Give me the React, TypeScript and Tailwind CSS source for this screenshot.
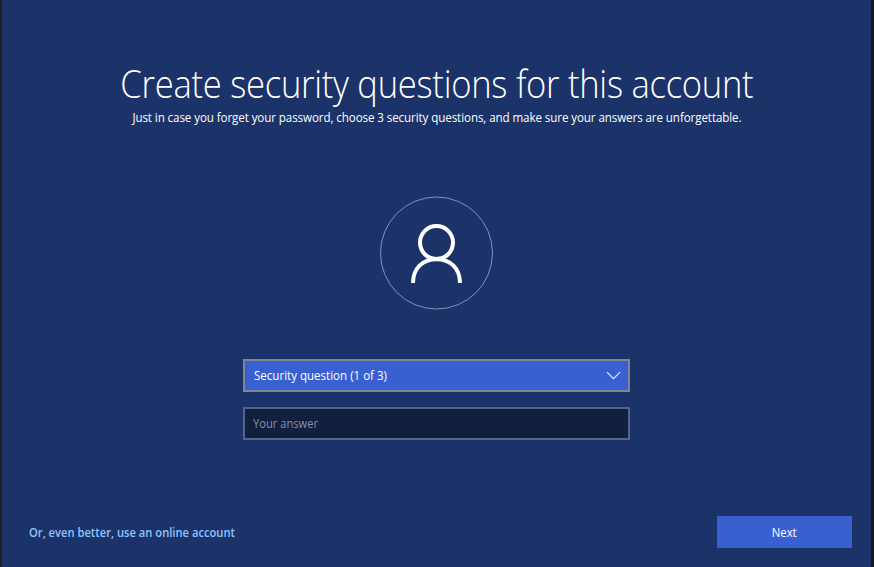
function UserAvatar() {
  return (
    <svg className="block h-[114px] w-[113px]" viewBox="0 0 113 114" fill="none">
      <circle cx="56.5" cy="57" r="56" stroke="#7f93b8" strokeWidth="1" />
      <circle cx="56.5" cy="46.6" r="16.5" stroke="#fff" strokeWidth="4" />
      <path d="M33 87C33 72.5 42.5 63.2 56.5 63.2S80 72.5 80 87" stroke="#fff" strokeWidth="4" />
    </svg>
  );
}

export default function App() {
  return (
    <div className="flex h-[567px] w-[874px] border-l-2 border-r-3 border-l-[#1c1f26] border-r-[#16191c] bg-[#1c3369] font-['Open_Sans','Noto_Sans',sans-serif] text-white">
      <main className="flex w-full flex-col items-center">
        <h1 className="mt-[56px] h-[54px] scale-x-[0.91] whitespace-nowrap text-[38px] leading-[54px] font-light tracking-[-0.3px]">
          Create security questions for this account
        </h1>
        <p className="h-[16px] scale-x-[0.967] whitespace-nowrap text-[12px] leading-[16px] tracking-[-0.1px]">
          Just in case you forget your password, choose 3 security questions, and make sure your answers are unforgettable.
        </p>
        <div className="mt-[70px]">
          <UserAvatar />
        </div>
        <form className="mt-[49px] flex w-[387px] flex-col gap-[15px]">
          <button type="button" className="flex h-[33px] items-center justify-between border-2 border-[#80858f] bg-[#3860d0] pr-[7px] pl-[9px] text-[12px]">
            <span className="origin-left scale-x-[0.962]">Security question (1 of 3)</span>
            <svg className="h-[9px] w-[15px]" viewBox="0 0 15 9" fill="none" stroke="#e3eeff" strokeWidth="1.2">
              <path d="M1 1.2L7.5 7.7L14 1.2" />
            </svg>
          </button>
          <div className="flex h-[33px] items-center border-2 border-[#566580] bg-[#11203f] pl-[8px] text-[12px] text-[#8590a3]">
            <span className="origin-left scale-x-[0.93]">Your answer</span>
          </div>
        </form>
        <footer className="mt-[76px] flex w-full items-center justify-between pr-[19px] pl-[27px] text-[12px]">
          <a className="origin-left scale-x-[0.932] pt-0.5 font-semibold text-[#8fc3ff]">Or, even better, use an online account</a>
          <button type="button" className="h-[32px] w-[135px] bg-[#3860d0] pt-px">
            <span className="inline-block scale-x-[0.95]">Next</span>
          </button>
        </footer>
      </main>
    </div>
  );
}
